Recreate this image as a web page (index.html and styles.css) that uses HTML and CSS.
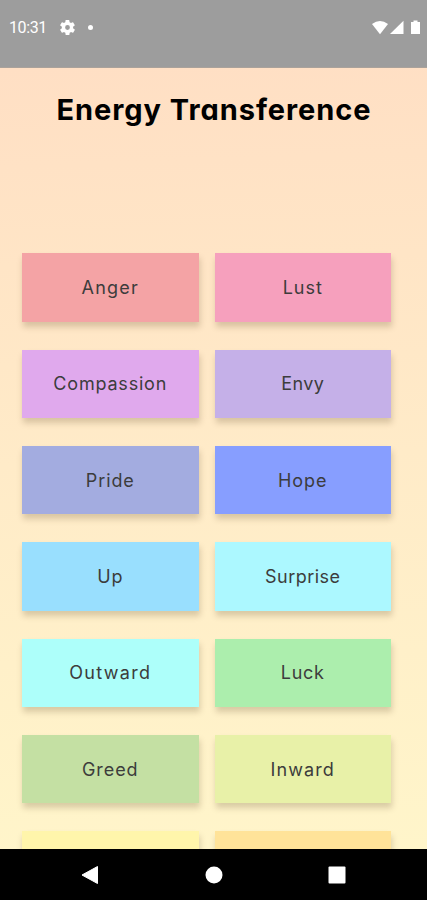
FILE: index.html
```
<!DOCTYPE html>
<html lang="en">
<head>
<meta charset="utf-8">
<title>Energy Transference</title>
<link rel="stylesheet" href="styles.css">
</head>
<body>
<div class="phone">
  <header class="status">
    <span class="clock">10:31</span>
    <svg class="gear" viewBox="2 2 20 20"><path fill="#fff" fill-rule="evenodd" d="M19.4 13a7.8 7.8 0 0 0 0-2l2.1-1.6a.5.5 0 0 0 .1-.7l-2-3.4a.5.5 0 0 0-.6-.2l-2.5 1a7.6 7.6 0 0 0-1.7-1L14.400 2.400a.5.5 0 0 0-.5-.4h-4a.5.5 0 0 0-.5.4L9.100 5.100a7.600 7.600 0 0 0-1.700 1l-2.500-1a.5.5 0 0 0-.6.2l-2 3.400a.5.5 0 0 0 .1.700L4.500 11a7.800 7.800 0 0 0 0 2l-2.100 1.600a.5.5 0 0 0-.1.700l2 3.400c.1.200.4.300.6.200l2.500-1a7.600 7.600 0 0 0 1.700 1l.4 2.700c0 .2.200.4.500.4h4c.300 0 .500-.2.500-.4l.400-2.700a7.600 7.600 0 0 0 1.700-1l2.500 1c.200.1.500 0 .600-.2l2-3.400a.5.5 0 0 0-.1-.700zM12 15.200a3.200 3.200 0 1 1 0-6.400 3.200 3.200 0 0 1 0 6.400z"/></svg>
    <i class="dot"></i>
    <svg class="signals" viewBox="0 0 50 16"><g fill="#fff"><path d="M0 4Q8-2 16 4L8 14.200z"/><path d="M31.500 .8V14H18z"/><path d="M39 2h2.500V.5h4V2H48v12h-9z"/></g></svg>
  </header>
  <main class="screen">
    <h1 class="title">Energy Transference</h1>
    <div class="grid">
      <button class="tile anger">Anger</button>
      <button class="tile lust">Lust</button>
      <button class="tile compassion">Compassion</button>
      <button class="tile envy">Envy</button>
      <button class="tile pride">Pride</button>
      <button class="tile hope">Hope</button>
      <button class="tile up">Up</button>
      <button class="tile surprise">Surprise</button>
      <button class="tile outward">Outward</button>
      <button class="tile luck">Luck</button>
      <button class="tile greed">Greed</button>
      <button class="tile inward">Inward</button>
      <button class="tile yellow"></button>
      <button class="tile amber"></button>
    </div>
  </main>
  <nav class="nav">
    <svg viewBox="0 0 18 20"><path d="M16.500 1.500V18.500L1 10z" fill="#fff" stroke="#fff" stroke-linejoin="round"/></svg>
    <svg viewBox="0 0 18 20"><circle cx="9" cy="10" r="8.500" fill="#fff"/></svg>
    <svg viewBox="0 0 18 20"><rect x=".5" y="1.500" width="17" height="17" rx="1" fill="#fff"/></svg>
  </nav>
</div>
</body>
</html>
```
FILE: styles.css
```
* { box-sizing: border-box; }
body { margin: 0; }
.phone {
  width: 427px;
  height: 900px;
  display: flex;
  flex-direction: column;
  overflow: hidden;
  background: #000;
}
.status {
  height: 68px;
  flex: none;
  display: flex;
  align-items: flex-start;
  padding: 19px 5px 0 9px;
  background: #9d9d9d;
  border-bottom: 1px solid #aaa29b;
  color: #fff;
}
.clock {
  width: 51px;
  font: 16px/18px Roboto, sans-serif;
  letter-spacing: -.4px;
}
.gear { width: 15px; height: 15px; margin-top: 1px; }
.dot { width: 5px; height: 5px; margin: 6px 0 0 13px; border-radius: 50%; background: #fff; }
.signals { width: 50px; height: 16px; margin: 1px 0 0 auto; }
.screen {
  height: 781px;
  flex: none;
  overflow: hidden;
  background: linear-gradient(178deg, #ffdfc4, #ffebc8 50%, #fff5ca);
}
.title {
  margin: 0;
  padding: 22px 0 0 1px;
  height: 185.400px;
  font: 700 29px/40px Inter, sans-serif;
  font-feature-settings: "cv11";
  letter-spacing: .95px;
  text-align: center;
  white-space: nowrap;
}
.grid {
  display: grid;
  grid-template-columns: 176.500px 176.500px;
  grid-auto-rows: 68.300px;
  gap: 28px 16px;
  padding-left: 22px;
}
.tile {
  border: 0;
  padding: 1px 0 0;
  color: #3c3c3c;
  font: 400 18px/24px Inter, sans-serif;
  letter-spacing: .9px;
  box-shadow: 1px 5px 6px rgba(80, 65, 30, .22);
}
.anger { background: #f4a3a5; letter-spacing: 1.2px; }
.lust { background: #f6a0bd; letter-spacing: 1px; }
.compassion { background: #e0a9ed; letter-spacing: .8px; }
.envy { background: #c5b0e8; letter-spacing: .4px; }
.pride { background: #a3ace0; }
.hope { background: #879eff; }
.up { background: #99dffe; }
.surprise { background: #acf8ff; letter-spacing: .45px; }
.outward { background: #adfffa; letter-spacing: 1.3px; }
.luck { background: #aceead; letter-spacing: .7px; }
.greed { background: #c4e0a3; }
.inward { background: #e8f1a8; letter-spacing: 1.1px; }
.yellow { background: #fff5ab; }
.amber { background: #ffe399; }
.nav {
  height: 51px;
  flex: none;
  display: flex;
  justify-content: space-between;
  align-items: center;
  padding: 0 81px;
}
.nav svg { width: 18px; height: 20px; }
```
